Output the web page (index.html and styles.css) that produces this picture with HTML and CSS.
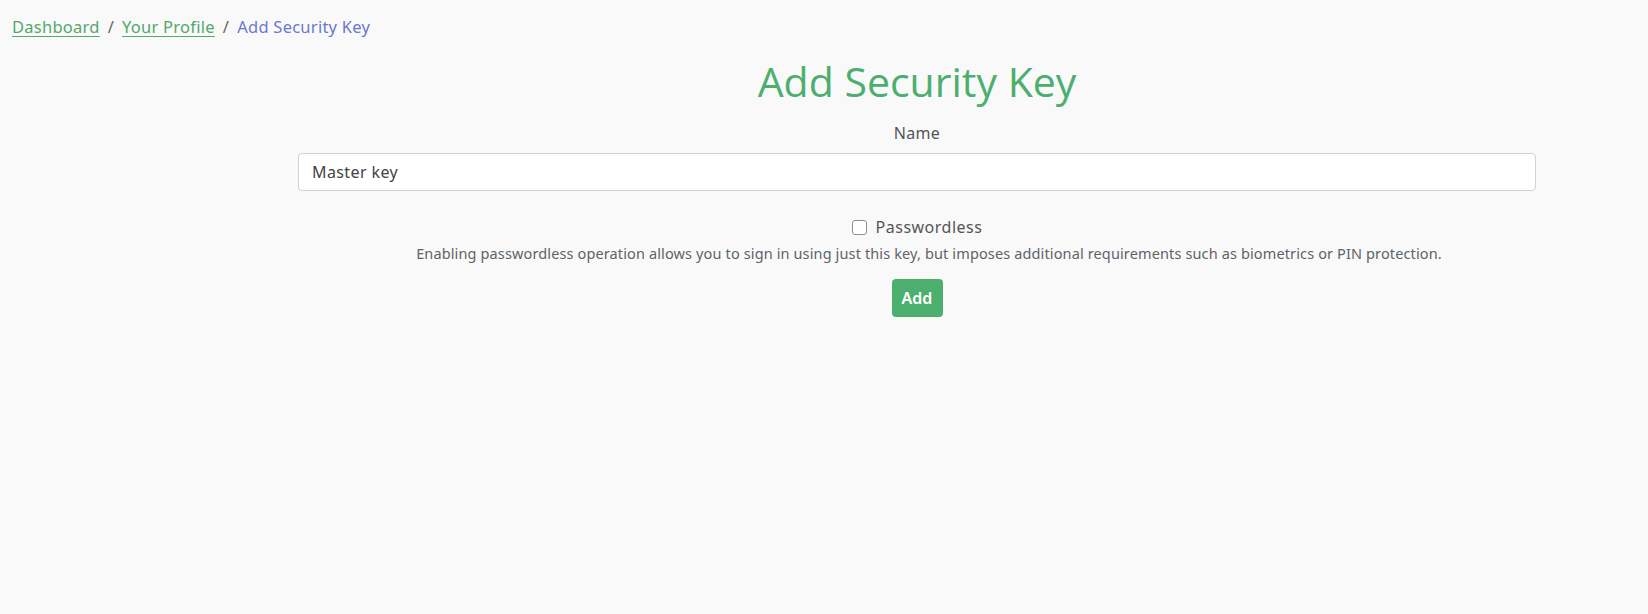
FILE: index.html
```html
<!DOCTYPE html>
<html lang="en">
<head>
<meta charset="utf-8">
<title>Add Security Key</title>
<link rel="stylesheet" href="styles.css">
</head>
<body>
<nav class="breadcrumb">
  <a href="#" class="crumb-link">Dashboard</a>
  <span class="sep">/</span>
  <a href="#" class="crumb-link">Your Profile</a>
  <span class="sep">/</span>
  <span class="crumb-active">Add Security Key</span>
</nav>
<main class="content">
  <h1 class="title">Add Security Key</h1>
  <form class="form">
    <label class="label" for="name">Name</label>
    <input class="input" id="name" type="text" value="Master key">
    <div class="check-row">
      <input type="checkbox" class="checkbox" id="pwless">
      <label for="pwless" class="check-label">Passwordless</label>
    </div>
    <p class="help">Enabling passwordless operation allows you to sign in using just this key, but imposes additional requirements such as biometrics or PIN protection.</p>
    <button type="button" class="btn">Add</button>
  </form>
</main>
</body>
</html>
```

FILE: styles.css
```css
html, body {
  margin: 0;
  padding: 0;
  background: #f9f9fa;
}
body {
  font-family: "Noto Sans", "Open Sans", sans-serif;
  color: #555;
  letter-spacing: 0.3px;
  width: 1648px;
  height: 614px;
}
.breadcrumb {
  display: flex;
  align-items: center;
  gap: 8px;
  padding: 15px 0 0 12px;
  font-size: 16.5px;
  letter-spacing: 0.25px;
  line-height: 24px;
}
.crumb-link {
  color: #53a86b;
  text-decoration: underline;
  text-underline-offset: 3px;
}
.sep {
  color: #666;
}
.crumb-active {
  color: #6b78cc;
}
.content {
  margin-left: 298px;
  width: 1238px;
  text-align: center;
}
.title {
  margin: 18px 0 0;
  font-family: "Open Sans", sans-serif;
  font-weight: 400;
  font-size: 41px;
  letter-spacing: 0;
  line-height: 48px;
  color: #4caf6e;
}
.form {
  display: flex;
  flex-direction: column;
  align-items: center;
}
.label {
  margin-top: 16px;
  font-size: 16px;
  line-height: 24px;
  color: #555;
}
.input {
  box-sizing: border-box;
  margin-top: 8px;
  width: 100%;
  height: 38px;
  padding: 0 13px;
  border: 1px solid #cfd2d6;
  border-radius: 4px;
  background: #fff;
  font-family: inherit;
  font-size: 16px;
  letter-spacing: 0.4px;
  color: #444;
  outline: none;
}
.check-row {
  margin-top: 24px;
  display: flex;
  align-items: center;
  gap: 9px;
  height: 24px;
}
.checkbox {
  appearance: none;
  -webkit-appearance: none;
  margin: 0;
  width: 15px;
  height: 15px;
  border: 1px solid #8d9096;
  border-radius: 3px;
  background: #fff;
}
.check-label {
  font-size: 16px;
  line-height: 24px;
  letter-spacing: 0.5px;
  color: #555;
}
.help {
  margin: 4px 0 0;
  padding-left: 24px;
  font-size: 14.5px;
  letter-spacing: 0.13px;
  line-height: 20px;
  color: #5f6368;
}
.btn {
  margin-top: 16px;
  height: 38px;
  width: 51px;
  padding: 0;
  border: none;
  border-radius: 4px;
  background: #4caf6e;
  color: #fff;
  font-family: inherit;
  font-size: 16px;
  font-weight: 600;
}
```
